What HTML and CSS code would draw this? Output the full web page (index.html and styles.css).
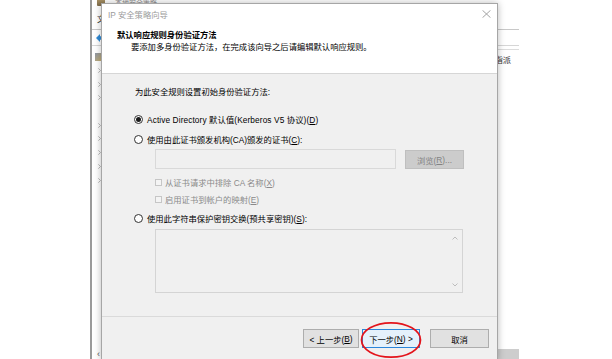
FILE: index.html
```html
<!DOCTYPE html>
<html lang="zh-CN">
<head>
<meta charset="utf-8">
<title>IP 安全策略向导</title>
<link rel="stylesheet" href="styles.css">
</head>
<body>
<div class="desk">
  <div class="bgwin">
    <div class="bg-title"><span class="app-ico"></span><span class="bg-title-text">本地安全策略</span></div>
    <div class="bg-menu">文件</div>
    <div class="bg-tool">
      <svg class="back" width="8" height="8" viewBox="0 0 8 8"><path d="M0 4 L4 0 L4 2.3 L8 2.3 L8 5.7 L4 5.7 L4 8 Z" fill="#2f8ad6"/></svg>
    </div>
    <div class="bg-main">
      <div class="tree">
        <div class="tree-row"><span class="root-ico"></span></div>
        <div class="tree-row"><svg class="chev" width="3" height="5" viewBox="0 0 3 5"><path d="M0.3 0.3 L2.5 2.5 L0.3 4.7" fill="none" stroke="#a8a8a8" stroke-width="0.8"/></svg></div>
        <div class="tree-row"><svg class="chev" width="3" height="5" viewBox="0 0 3 5"><path d="M0.3 0.3 L2.5 2.5 L0.3 4.7" fill="none" stroke="#a8a8a8" stroke-width="0.8"/></svg></div>
        <div class="tree-row"><svg class="chev" width="3" height="5" viewBox="0 0 3 5"><path d="M0.3 0.3 L2.5 2.5 L0.3 4.7" fill="none" stroke="#a8a8a8" stroke-width="0.8"/></svg></div>
        <div class="tree-row"><span class="nochev"></span></div>
        <div class="tree-row"><svg class="chev" width="3" height="5" viewBox="0 0 3 5"><path d="M0.3 0.3 L2.5 2.5 L0.3 4.7" fill="none" stroke="#a8a8a8" stroke-width="0.8"/></svg></div>
        <div class="tree-row"><svg class="chev" width="3" height="5" viewBox="0 0 3 5"><path d="M0.3 0.3 L2.5 2.5 L0.3 4.7" fill="none" stroke="#a8a8a8" stroke-width="0.8"/></svg></div>
        <div class="tree-row"><svg class="chev" width="3" height="5" viewBox="0 0 3 5"><path d="M0.3 0.3 L2.5 2.5 L0.3 4.7" fill="none" stroke="#a8a8a8" stroke-width="0.8"/></svg></div>
        <div class="tree-row"><svg class="chev" width="3" height="5" viewBox="0 0 3 5"><path d="M0.3 0.3 L2.5 2.5 L0.3 4.7" fill="none" stroke="#a8a8a8" stroke-width="0.8"/></svg></div>
        <div class="tree-row"><svg class="chev" width="3" height="5" viewBox="0 0 3 5"><path d="M0.3 0.3 L2.5 2.5 L0.3 4.7" fill="none" stroke="#a8a8a8" stroke-width="0.8"/></svg></div>
      </div>
      <div class="list">
        <div class="list-head"><span>策略已指派</span></div>
      </div>
    </div>
    <div class="bg-scroll">
      <div class="sc-left">‹</div>
      <div class="sc-right"><div class="thumb"></div></div>
    </div>
  </div>

  <div class="dialog">
    <div class="titlebar">
      <span class="title">IP 安全策略向导</span>
      <svg class="close" width="9" height="8" viewBox="0 0 9 8"><path d="M0.5 0.3 L8.5 7.7 M8.5 0.3 L0.5 7.7" stroke="#9a9a9a" stroke-width="0.9" fill="none"/></svg>
    </div>
    <div class="header">
      <div class="h1">默认响应规则身份验证方法</div>
      <div class="h2">要添加多身份验证方法，在完成该向导之后请编辑默认响应规则。</div>
    </div>
    <div class="body">
      <div class="intro">为此安全规则设置初始身份验证方法:</div>
      <div class="opt opt1"><span class="radio checked"></span><span class="latin">Active Directory 默认值(Kerberos V5 协议)(<u>D</u>)</span></div>
      <div class="opt opt2"><span class="radio"></span><span>使用由此证书颁发机构(CA)颁发的证书(<u>C</u>):</span></div>
      <div class="cert-row">
        <div class="textbox"></div>
        <div class="browse">浏览(<u>R</u>)...</div>
      </div>
      <div class="check check1"><span class="box"></span><span>从证书请求中排除 CA 名称(<u>X</u>)</span></div>
      <div class="check check2"><span class="box"></span><span>启用证书到帐户的映射(<u>E</u>)</span></div>
      <div class="opt opt3"><span class="radio"></span><span>使用此字符串保护密钥交换(预共享密钥)(<u>S</u>):</span></div>
      <div class="textarea">
        <div class="ta-scroll">
          <svg width="6" height="4" viewBox="0 0 6 4"><path d="M0.5 3.5 L3 1 L5.5 3.5" fill="none" stroke="#b0b0b0" stroke-width="0.8"/></svg>
          <svg width="6" height="4" viewBox="0 0 6 4"><path d="M0.5 0.5 L3 3 L5.5 0.5" fill="none" stroke="#b0b0b0" stroke-width="0.8"/></svg>
        </div>
      </div>
    </div>
    <div class="footer">
      <div class="btn btn-back">&lt; 上一步(<u>B</u>)</div>
      <div class="btn btn-next">下一步(<u>N</u>) &gt;</div>
      <div class="btn btn-cancel">取消</div>
    </div>
    <svg class="ring" width="62" height="38" viewBox="0 0 62 38"><ellipse cx="31" cy="19" rx="29.5" ry="17.2" fill="none" stroke="#e3141b" stroke-width="1.7"/></svg>
  </div>
</div>
</body>
</html>
```

FILE: styles.css
```css
html, body {
  margin: 0;
  padding: 0;
  background: #ffffff;
}

.desk {
  position: relative;
  width: 612px;
  height: 359px;
  overflow: hidden;
  font-family: "Liberation Sans", "Noto Sans CJK SC", sans-serif;
  font-size: 8.3px;
  color: #000;
}

/* ---------- background window ---------- */
.bgwin {
  position: absolute;
  left: 90px;
  top: -6px;
  width: 429px;
  height: 365px;
  box-sizing: border-box;
  border-left: 2px solid #9a9a9a;
  background: #fff;
  display: flex;
  flex-direction: column;
  color: #333;
}

.bg-title {
  height: 15px;
  display: flex;
  align-items: center;
  padding-left: 5px;
  gap: 10px;
}

.app-ico {
  width: 8px;
  height: 8px;
  background: linear-gradient(#b39b6a, #7d6a4a);
  border-radius: 1px;
}

.bg-title-text {
  color: #8a8a8a;
  font-size: 7px;
}

.bg-menu {
  height: 20px;
  line-height: 20px;
  padding-left: 5px;
  border-bottom: 1px solid #c8c8c8;
  white-space: nowrap;
}

.bg-tool {
  height: 15px;
  display: flex;
  align-items: center;
  padding-left: 4px;
  border-bottom: 1px solid #d6d6d6;
}

.bg-main {
  flex: 1;
  display: flex;
}

.tree {
  width: 120px;
  padding-top: 4px;
}

.tree-row {
  height: 13.7px;
  display: flex;
  align-items: center;
  gap: 4px;
  padding-left: 6px;
  white-space: nowrap;
}

.chev {
  flex: none;
}

.nochev {
  width: 3px;
}

.root-ico {
  width: 8px;
  height: 8px;
  margin-left: -3px;
  background: linear-gradient(135deg, #8d96a6, #cdb26a);
}

.list {
  flex: 1;
  padding-top: 3px;
}

.list-head {
  border-top: 1px solid #dcdcdc;
  height: 17px;
  display: flex;
  align-items: center;
  justify-content: flex-end;
  padding-right: 8px;
  white-space: nowrap;
}

.bg-scroll {
  height: 10px;
  display: flex;
}

.sc-left {
  width: 120px;
  padding-left: 5px;
  font-size: 9px;
  line-height: 10px;
  color: #555;
}

.sc-right {
  flex: 1;
  display: flex;
  justify-content: flex-end;
}

.thumb {
  width: 60px;
  background: #cdcdcd;
}

/* ---------- dialog ---------- */
.dialog {
  position: absolute;
  left: 101px;
  top: 3px;
  width: 397px;
  height: 358px;
  box-sizing: border-box;
  border: 1px solid #a6a6a6;
  background: #f0f0f0;
  box-shadow: 0 0 7px rgba(0, 0, 0, 0.28);
  display: flex;
  flex-direction: column;
}

.titlebar {
  height: 20px;
  background: #fff;
  display: flex;
  align-items: center;
  justify-content: space-between;
  padding: 0 6px 0 6px;
}

.title {
  color: #9b9b9b;
}

.close {
  margin-top: -1px;
}

.header {
  height: 50px;
  box-sizing: border-box;
  background: #fff;
  border-bottom: 1px solid #d6d6d6;
  padding: 5px 0 0 15px;
}

.h1 {
  font-weight: bold;
  line-height: 12px;
}

.h2 {
  line-height: 12px;
  padding-left: 14px;
}

.body {
  flex: 1;
  padding-left: 32px;
  display: flex;
  flex-direction: column;
}

.intro {
  margin-top: 12px;
  margin-left: 1px;
  line-height: 12px;
}

.opt {
  height: 14px;
  display: flex;
  align-items: center;
  gap: 4px;
  white-space: nowrap;
}

.latin {
  letter-spacing: 0.1px;
}

.opt1 { margin-top: 14px; }
.opt2 { margin-top: 6px; }
.opt3 { margin-top: 5px; }

.radio {
  width: 9px;
  height: 9px;
  box-sizing: border-box;
  border: 1px solid #333;
  border-radius: 50%;
  background: #fff;
  display: grid;
  place-items: center;
  flex: none;
}

.radio.checked::after {
  content: "";
  width: 5px;
  height: 5px;
  border-radius: 50%;
  background: #1a1a1a;
}

.cert-row {
  margin-top: 3px;
  margin-left: 21px;
  display: flex;
  align-items: flex-start;
}

.textbox {
  width: 241px;
  height: 20px;
  box-sizing: border-box;
  border: 1px solid #d9d9d9;
  background: #f0f0f0;
}

.browse {
  margin-left: 9px;
  margin-top: 1px;
  width: 59px;
  height: 19px;
  box-sizing: border-box;
  border: 1px solid #bfbfbf;
  background: #cccccc;
  color: #838383;
  display: flex;
  align-items: center;
  justify-content: center;
}

.check {
  margin-left: 21px;
  height: 14px;
  display: flex;
  align-items: center;
  gap: 3px;
  color: #8a8a8a;
  white-space: nowrap;
}

.check1 { margin-top: 6px; }
.check2 { margin-top: 3px; }

.box {
  width: 7px;
  height: 7px;
  box-sizing: border-box;
  border: 1px solid #c6c6c6;
  background: #f4f4f4;
  flex: none;
}

.textarea {
  margin-top: 4px;
  margin-left: 21px;
  width: 308px;
  height: 64px;
  box-sizing: border-box;
  border: 1px solid #d4d4d4;
  background: #f0f0f0;
  display: flex;
  justify-content: flex-end;
}

.ta-scroll {
  width: 14px;
  display: flex;
  flex-direction: column;
  align-items: center;
  justify-content: space-between;
  padding: 6px 0 5px;
}

.footer {
  height: 44px;
  box-sizing: border-box;
  border-top: 1px solid #dadada;
  display: flex;
  justify-content: flex-end;
  align-items: flex-start;
  padding: 12px 8px 0 0;
}

.btn {
  height: 19px;
  box-sizing: border-box;
  border: 1px solid #adadad;
  background: #e1e1e1;
  display: flex;
  align-items: center;
  justify-content: center;
  white-space: nowrap;
}

.btn-back { width: 56px; }
.btn-next {
  width: 58px;
  margin-left: 3px;
  border-color: #2b86d9;
  background: #e5f1fb;
}
.btn-cancel {
  width: 59px;
  margin-left: 10px;
}

.ring {
  position: absolute;
  left: 258px;
  top: 317px;
}
```
